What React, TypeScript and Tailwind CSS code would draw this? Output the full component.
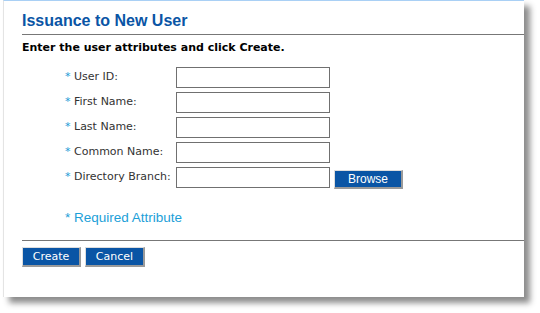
export default function App() {
  const fields = ["User ID:", "First Name:", "Last Name:", "Common Name:", "Directory Branch:"];

  return (
    <div className="w-[540px] h-[313px] bg-white font-['Liberation_Sans',Arial,sans-serif]">
      <div className="ml-[3px] w-[521px] h-[297px] bg-white border-t border-t-[#a9d0f5] border-l border-l-[#e4e4e4] shadow-[6px_6px_6px_rgba(0,0,0,0.45)] pl-[18px]">
        {/* title */}
        <h1 className="pt-[10px] h-[33px] text-[16px] font-bold leading-[20px] text-[#0a55a5]">
          Issuance to New User
        </h1>
        <div className="h-px bg-[#777777]" />

        <p className="mt-[6px] font-['DejaVu_Sans',Verdana,sans-serif] text-[11px] font-bold leading-[14px] text-black">
          Enter the user attributes and click Create.
        </p>

        {/* form */}
        <div className="mt-[12px] flex flex-col gap-[4px] font-['DejaVu_Sans',Verdana,sans-serif] text-[11px] text-[#333333]">
          {fields.map((f) => (
            <div key={f} className="flex items-center h-[21px]">
              <div className="w-[154px] shrink-0 pl-[43px] whitespace-nowrap">
                <span className="text-[#1a9ad6]">*</span> {f}
              </div>
              <input
                type="text"
                className="w-[154px] h-[21px] shrink-0 border border-[#707070] bg-white outline-none"
              />
              {f === "Directory Branch:" && (
                <button className="ml-[4px] mt-[3px] w-[69px] h-[19px] shrink-0 bg-[#0a55a5] border border-t-[#dddddd] border-l-[#dddddd] border-r-[#9a9a9a] border-b-[#9a9a9a] border-r-2 border-b-2 text-white text-[12px] leading-[14px] font-['Liberation_Sans',Arial,sans-serif]">
                  Browse
                </button>
              )}
            </div>
          ))}
        </div>

        <div className="mt-[21px] pl-[43px] text-[13.5px] leading-[17px] text-[#1ca0d8]">
          * Required Attribute
        </div>

        <div className="mt-[14px] h-px bg-[#777777]" />

        <div className="mt-[6px] flex gap-[4px] font-['DejaVu_Sans',Verdana,sans-serif]">
          <button className="w-[59px] h-[20px] bg-[#0a55a5] border border-t-[#dddddd] border-l-[#dddddd] border-r-[#9a9a9a] border-b-[#9a9a9a] border-r-2 border-b-2 text-white text-[11px] leading-[14px]">
            Create
          </button>
          <button className="w-[60px] h-[20px] bg-[#0a55a5] border border-t-[#dddddd] border-l-[#dddddd] border-r-[#9a9a9a] border-b-[#9a9a9a] border-r-2 border-b-2 text-white text-[11px] leading-[14px]">
            Cancel
          </button>
        </div>
      </div>
    </div>
  );
}
